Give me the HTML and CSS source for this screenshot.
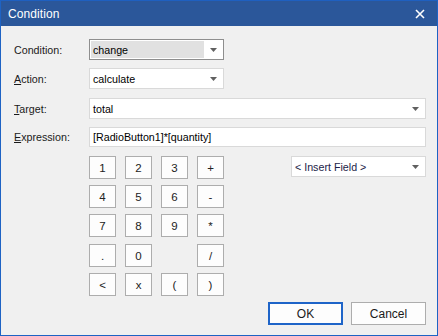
FILE: index.html
```html
<!DOCTYPE html>
<html>
<head>
<meta charset="utf-8">
<link rel="stylesheet" href="styles.css">
</head>
<body>
<div class="window">
  <div class="titlebar">
    <span class="title">Condition</span>
    <svg class="close" width="10" height="10" viewBox="0 0 10 10"><path d="M1 1 L9 9 M9 1 L1 9" stroke="#fff" stroke-width="1.6" fill="none"/></svg>
  </div>
  <div class="content">
    <div class="form">
      <div class="label">Condition:</div>
      <div class="field combo combo-disabled short">
        <span class="sel">change</span>
        <span class="arrow"><svg width="7" height="4" viewBox="0 0 7 4"><path d="M0 0 H7 L3.5 4 Z" fill="#606060"/></svg></span>
      </div>
      <div class="label"><u>A</u>ction:</div>
      <div class="field combo short">
        <span class="val">calculate</span>
        <span class="arrow"><svg width="7" height="4" viewBox="0 0 7 4"><path d="M0 0 H7 L3.5 4 Z" fill="#606060"/></svg></span>
      </div>
      <div class="label shift"><u>T</u>arget:</div>
      <div class="field combo shift">
        <span class="val">total</span>
        <span class="arrow"><svg width="7" height="4" viewBox="0 0 7 4"><path d="M0 0 H7 L3.5 4 Z" fill="#606060"/></svg></span>
      </div>
      <div class="label"><u>E</u>xpression:</div>
      <div class="field text-field">
        <span class="val">[RadioButton1]*[quantity]</span>
      </div>
    </div>
    <div class="middle">
      <div class="keypad">
        <button class="key">1</button><button class="key">2</button><button class="key">3</button><button class="key">+</button>
        <button class="key">4</button><button class="key">5</button><button class="key">6</button><button class="key">-</button>
        <button class="key">7</button><button class="key">8</button><button class="key">9</button><button class="key">*</button>
        <button class="key r4">.</button><button class="key r4">0</button><span class="empty r4"></span><button class="key r4">/</button>
        <button class="key">&lt;</button><button class="key">x</button><button class="key">(</button><button class="key">)</button>
      </div>
      <div class="field combo insert">
        <span class="val ins">&lt; Insert Field &gt;</span>
        <span class="arrow"><svg width="7" height="4" viewBox="0 0 7 4"><path d="M0 0 H7 L3.5 4 Z" fill="#606060"/></svg></span>
      </div>
    </div>
    <div class="actions">
      <button class="btn btn-default">OK</button>
      <button class="btn">Cancel</button>
    </div>
  </div>
</div>
</body>
</html>
```

FILE: styles.css
```css
* { box-sizing: border-box; }
html, body { margin: 0; padding: 0; background: #f0f0f0; }
body { font-family: "Liberation Sans", Arial, sans-serif; }

.window {
  width: 438px;
  height: 336px;
  border: 1px solid #1e63c4;
  border-top-color: #1f60c0;
  background: #f0f0f0;
  display: flex;
  flex-direction: column;
}

.titlebar {
  height: 25px;
  background: #2b579a;
  color: #fff;
  display: flex;
  align-items: center;
  justify-content: space-between;
  padding: 0 12px 0 7px;
  flex: none;
}
.title { font-size: 12px; letter-spacing: 0.1px; }
.close { display: block; }

.content {
  flex: 1;
  display: flex;
  flex-direction: column;
  padding: 13px 11px 0 13px;
  font-size: 10.7px;
  color: #000;
}

.form {
  display: grid;
  grid-template-columns: 75px 1fr;
  row-gap: 8px;
  align-items: center;
}
.label { color: #1a1a1a; }
.label u { text-decoration-thickness: 1px; text-underline-offset: 1px; }
.shift { margin-top: 1px; }

.field {
  height: 21px;
  background: #fff;
  border: 1px solid #d9d9d9;
  display: flex;
  align-items: center;
  padding: 0 0 0 3px;
}
.field.short { width: 135px; }
.text-field { height: 20px; }
.combo .val { flex: 1; }
.combo .arrow {
  width: 19px;
  height: 100%;
  display: flex;
  align-items: center;
  justify-content: center;
  flex: none;
}
.combo .arrow svg { display: block; }

.combo-disabled {
  border-color: #8e8e8e;
  padding: 1px;
}
.combo-disabled .sel {
  flex: 1;
  align-self: stretch;
  background: #e1e1e1;
  display: flex;
  align-items: center;
  padding-left: 2px;
}
.combo-disabled .arrow { width: 18px; }

.middle {
  display: flex;
  justify-content: space-between;
  align-items: flex-start;
  margin-top: 9px;
  padding-left: 75px;
}

.keypad {
  display: grid;
  grid-template-columns: repeat(4, 27px);
  column-gap: 9px;
  row-gap: 6px;
}
.key {
  width: 27px;
  height: 23px;
  padding: 0;
  margin: 0;
  background: #fdfdfd;
  border: 1px solid #adadad;
  font-family: "Liberation Sans", Arial, sans-serif;
  font-size: 11.5px;
  color: #222;
}
.r4 { margin-top: 1px; }
.empty { display: block; width: 27px; height: 23px; }

.insert {
  width: 135px;
  height: 21px;
}
.ins { color: #1c1c48; }

.actions {
  display: flex;
  justify-content: flex-end;
  gap: 8px;
  margin-top: 6px;
}
.btn {
  width: 75px;
  height: 23px;
  padding: 0;
  background: #fdfdfd;
  border: 1px solid #adadad;
  font-family: "Liberation Sans", Arial, sans-serif;
  font-size: 12px;
  color: #1a1a1a;
}
.btn-default {
  border: 2px solid #1e64c8;
}
```
